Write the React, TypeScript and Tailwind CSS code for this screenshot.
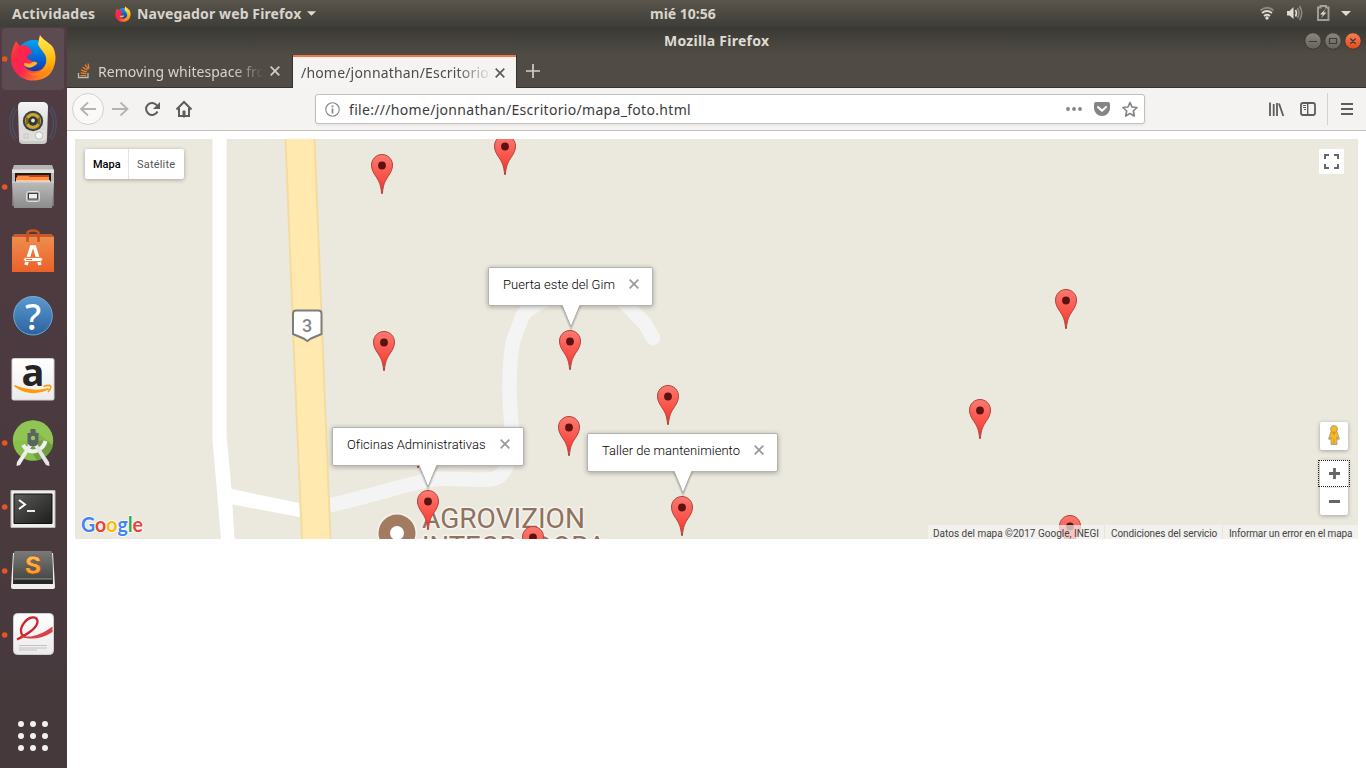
import React from "react";

const MARKERS: [number, number][] = [
  [505, 135],
  [382, 154],
  [1066, 289],
  [570, 330],
  [384, 331],
  [668, 385],
  [980, 399],
  [569, 416],
  [418, 428],
  [428, 490],
  [682, 496],
  [1070, 515],
  [533, 526],
];

function Marker({ x, y }: { x: number; y: number }) {
  return (
    <g transform={`translate(${x - 11} ${y})`}>
      <path
        d="M11 .5C5.2.5.5 5.2.5 11c0 4.300 1.700 7.500 4.300 11.300C7.900 26.800 10 31 10.600 39.500h.8C12 31 14.100 26.800 17.200 22.300 19.800 18.500 21.500 15.300 21.500 11 21.500 5.200 16.800.5 11 .5z"
        fill="url(#pin)"
        stroke="#b3443c"
        strokeWidth="1"
      />
      <circle cx="11" cy="11.500" r="3.900" fill="#5b1210" />
    </g>
  );
}

function Cross({ className }: { className: string }) {
  return (
    <svg className={className} viewBox="0 0 10 10" stroke="currentColor" strokeWidth="1.700" fill="none">
      <path d="M.7.700 9.300 9.300M9.300.700.7 9.300" />
    </svg>
  );
}

function InfoWindow({ text, className }: { text: string; className: string }) {
  return (
    <div className={"absolute flex h-[39px] rounded-[2px] border border-[#b4b3ae] bg-white pl-[14px] pr-[13px] shadow-[0_1px_5px_rgba(0,0,0,0.3)] " + className}>
      <span className="mt-[8px] grow whitespace-nowrap font-[Roboto] text-[13px] font-light leading-[18px] tracking-[0.02px] text-black">{text}</span>
      <Cross className="mt-[11px] size-[10px] text-[#989898]" />
    </div>
  );
}

function Tail({ x, y }: { x: number; y: number }) {
  return (
    <g transform={`translate(${x} ${y})`}>
      <path d="M-9 .5 0 22 9 .5" fill="none" stroke="#000" strokeOpacity=".12" strokeWidth="3.500" />
      <path d="M-9 0 0 22 9 0" fill="#fff" stroke="#a9a8a3" strokeWidth="1" />
      <path d="M-8.500-2h17V0l-.5 1h-16z" fill="#fff" />
    </g>
  );
}

function MapCanvas() {
  return (
    <svg className="absolute inset-0 h-[400px] w-[1283px]" viewBox="75 139 1283 400">
      <defs>
        <linearGradient id="pin" x1="0" y1="0" x2="0" y2="1">
          <stop offset="0" stopColor="#fc7a70" />
          <stop offset=".65" stopColor="#f94c43" />
          <stop offset="1" stopColor="#e0352d" />
        </linearGradient>
      </defs>
      <path d="M75 139H1358V539H75z" fill="#ebe8de" />
      <path d="M212.500 139H226.700V437L231.500 489 302 503.500V517.500L232.500 504.500 234.500 539H221L212.500 440z" fill="#fff" />
      <path
        d="M322 507C360 499 390 489 420 482 445 475 470 482 493 479 506 477 513 455 512 428 509 405 508 370 513 341L523 315Q527 309 545 300C570 287 604 284 625 303L645 324 653 338"
        fill="none"
        stroke="#f4f4f4"
        strokeWidth="14.500"
        strokeLinecap="round"
        strokeLinejoin="round"
      />
      <path d="M284.500 139H315.500L325 390 331 539H301L295 390z" fill="#ffe9ae" />
      <path d="M285.500 139 295.500 390 302 539M314.500 139 324.500 390 330.500 539" fill="none" stroke="#f3dca2" strokeWidth="2" />
      <path d="M293 313.500q0-3 3-3H318.500q3 0 3 3V334L311 338.500 307.300 341 303.500 338.500 293 334z" fill="#fff" stroke="#7d7d7d" strokeWidth="2" />
      <text x="307.200" y="332" textAnchor="middle" fontFamily="Roboto" fontSize="18" fontWeight="500" fill="#858585">3</text>
      <g stroke="#f5f3ee" strokeWidth="3" paintOrder="stroke" strokeLinejoin="round">
        <circle cx="397" cy="533" r="18.500" fill="#a27b60" />
        <g fontFamily="Roboto" fontSize="27" fill="#8f725f">
          <text x="422" y="527.500" textLength="163" lengthAdjust="spacingAndGlyphs">AGROVIZION</text>
          <text x="422" y="555.500" textLength="184" lengthAdjust="spacingAndGlyphs">INTEGRADORA</text>
        </g>
      </g>
      <circle cx="397" cy="533" r="7" fill="#fff" />
      {MARKERS.map(([x, y]) => (
        <Marker key={x} x={x} y={y} />
      ))}
      <text x="81" y="532" fontFamily="Lato" fontSize="21" fontWeight="700" textLength="62" lengthAdjust="spacingAndGlyphs" stroke="#fff" strokeWidth="2" strokeOpacity=".75" paintOrder="stroke">
        <tspan fill="#4285f4">G</tspan>
        <tspan fill="#ea4335">o</tspan>
        <tspan fill="#fbbc05">o</tspan>
        <tspan fill="#4285f4">g</tspan>
        <tspan fill="#34a853">l</tspan>
        <tspan fill="#ea4335">e</tspan>
      </text>
    </svg>
  );
}

function MapView() {
  return (
    <div className="relative h-[400px] w-[1283px] overflow-hidden font-[Roboto]">
      <MapCanvas />
      <InfoWindow text="Puerta este del Gim" className="left-[413px] top-[128px] w-[165px]" />
      <InfoWindow text="Oficinas Administrativas" className="left-[257px] top-[288px] w-[192px]" />
      <InfoWindow text="Taller de mantenimiento" className="left-[512px] top-[294px] w-[191px]" />
      <svg className="absolute inset-0 h-[400px] w-[1283px]" viewBox="75 139 1283 400">
        <Tail x={571} y={305} />
        <Tail x={428} y={465} />
        <Tail x={683} y={471} />
      </svg>
      <div className="absolute left-[10px] top-[10px] flex h-[30px] rounded-[2px] bg-white text-[11px] leading-[31px] shadow-[0_1px_4px_rgba(0,0,0,0.3)]">
        <span className="w-[43px] pl-[8px] font-medium text-black">Mapa</span>
        <span className="w-[56px] border-l border-[#e3e3e3] pl-[8px] tracking-[0.2px] text-[#565656]">Satélite</span>
      </div>
      <div className="absolute left-[1244px] top-[10px] flex size-[25px] items-center justify-center rounded-[1px] bg-white">
        <svg className="size-[15px]" viewBox="0 0 15 15" fill="none" stroke="#666" strokeWidth="2">
          <path d="M1 5V1h4M10 1h4v4M14 10v4h-4M5 14H1v-4" />
        </svg>
      </div>
      <div className="absolute left-[1245px] top-[283px] flex size-[28px] items-start justify-center rounded-[2px] bg-white pt-[3px] shadow-[0_1px_4px_rgba(0,0,0,0.3)]">
        <svg className="h-[20px] w-[12px]" viewBox="0 0 12 20" stroke="#8c8f96" strokeWidth=".7" fill="#fbb917">
          <path d="M3 6.500h6L11.500 14l-1.700.6L9 12v7.500H3V12l-.8 2.600L.5 14z" />
          <circle cx="6" cy="4" r="3.500" />
          <path d="M4 7.500h4L6 10z" fill="#e58b16" stroke="none" />
          <path d="M6 14v5.500" />
        </svg>
      </div>
      <div className="absolute left-[1245px] top-[321px] flex h-[55px] w-[28px] flex-col items-center rounded-[2px] bg-white shadow-[0_1px_4px_rgba(0,0,0,0.3)]">
        <svg className="h-[55px] w-[28px]" viewBox="0 0 28 55" stroke="#666" strokeWidth="2.800">
          <path d="M5 27.500h18" stroke="#e6e6e6" strokeWidth="1" />
          <path d="M9 13.500h11M14.500 8v11M9 41.500h11" />
        </svg>
      </div>
      <div className="absolute left-[1243px] top-[321px] h-[27px] w-[32px] border border-dotted border-[#222]" />
      <div className="absolute bottom-0 right-0 flex h-[14px] bg-[rgba(245,245,245,0.7)] text-[10px] leading-[17px] text-[#444]">
        <span className="w-[177px] whitespace-nowrap border-r border-[#e6e4dd] pl-[5px]">Datos del mapa ©2017 Google, INEGI</span>
        <span className="w-[118px] whitespace-nowrap border-r border-[#e6e4dd] pl-[6px] tracking-[-0.08px]">Condiciones del servicio</span>
        <span className="w-[135px] whitespace-nowrap pl-[6px] tracking-[-0.12px]">Informar un error en el mapa</span>
      </div>
    </div>
  );
}

function FirefoxLogo() {
  return (
    <g>
      <circle cx="34" cy="59" r="19" fill="url(#ffBlue)" />
      <path d="M16 41 20 46 26 45 31 50 32 53 27 56 28 59 36 63C34 68 25 67 24 65 26 71 37 74 43 68 51 60 45 51 40 48L38 42 40 35C42 39 48 42 52 46 58 54 56 68 49 75 38 84 21 82 14 70 9 61 11 50 16 41z" fill="url(#ffFire)" />
      <path d="M40 35C42 39 48 42 52 46 57 53 56 65 51 71 44 78 34 78 28 72 37 77 44 70 46 63 48 54 40 50 38 44z" fill="url(#ffYellow)" />
      <path d="M24 63C28 63 29 65 33 62 36 61 38 63 37 64 33 67 29 70 24 65z" fill="#ffb22b" />
    </g>
  );
}

function IconDefs() {
  return (
    <svg className="absolute size-0">
      <defs>
        <linearGradient id="ffBlue" x1="0" y1="0" x2="0" y2="1"><stop stopColor="#00a5f4" /><stop offset=".6" stopColor="#0758c9" /><stop offset="1" stopColor="#34127d" /></linearGradient>
        <linearGradient id="ffFire" x1="0" y1="0" x2="1" y2=".7"><stop stopColor="#ff6b22" /><stop offset=".25" stopColor="#ff2b45" /><stop offset=".5" stopColor="#fb2154" /><stop offset="1" stopColor="#ff9a12" /></linearGradient>
        <linearGradient id="ffYellow" x1="0" y1="0" x2="0" y2="1"><stop stopColor="#fff158" /><stop offset=".6" stopColor="#ffb90b" /><stop offset="1" stopColor="#ff7f18" /></linearGradient>
        <linearGradient id="silver" x1="0" y1="0" x2="0" y2="1"><stop stopColor="#f5f5f5" /><stop offset="1" stopColor="#c9c9c7" /></linearGradient>
        <linearGradient id="gray" x1="0" y1="0" x2="0" y2="1"><stop stopColor="#bababa" /><stop offset="1" stopColor="#8c8c8c" /></linearGradient>
        <linearGradient id="orange" x1="0" y1="0" x2="0" y2="1"><stop stopColor="#ed9151" /><stop offset="1" stopColor="#ec6128" /></linearGradient>
        <linearGradient id="blue" x1="0" y1="0" x2="0" y2="1"><stop stopColor="#5a9ad0" /><stop offset="1" stopColor="#2c629e" /></linearGradient>
        <linearGradient id="dark" x1="0" y1="0" x2="1" y2="1"><stop stopColor="#5b5b59" /><stop offset="1" stopColor="#1d1d1c" /></linearGradient>
        <linearGradient id="sub" x1="0" y1="0" x2="0" y2="1"><stop stopColor="#7a7a78" /><stop offset="1" stopColor="#484846" /></linearGradient>
        <linearGradient id="paper" x1="0" y1="0" x2="0" y2="1"><stop stopColor="#fff" /><stop offset="1" stopColor="#ebebeb" /></linearGradient>
        <linearGradient id="sOrange" x1="0" y1="0" x2="0" y2="1"><stop stopColor="#ffc86d" /><stop offset="1" stopColor="#ff8a0e" /></linearGradient>
      </defs>
    </svg>
  );
}

const DOCK: { name: string; running: boolean; art: React.ReactNode }[] = [
  { name: "Firefox", running: true, art: <FirefoxLogo /> },
  {
    name: "Rhythmbox",
    running: false,
    art: (
      <g>
        <g fill="none" stroke="#4a6489" strokeWidth="1.300" opacity=".5">
          <path d="M15 107C8 115 8 132 15 140M17 109C11 117 11 130 17 138M51 107C58 115 58 132 51 140M49 109C55 117 55 130 49 138" />
        </g>
        <path d="M22 102H44Q48 103 48 107L47 140Q47 144 43 144H23Q19 144 19 140L18 107Q18 102 22 102z" fill="url(#silver)" />
        <path d="M20 130H46V138Q45 141 42 141H24Q20 141 20 138z" fill="#dededb" />
        <circle cx="33" cy="121" r="10.200" fill="#3c4147" />
        <circle cx="33" cy="121" r="8" fill="#c8a928" />
        <path d="M33 121 26 117V125zM33 121 40 117V125z" fill="#7e6714" />
        <circle cx="33" cy="121" r="4.700" fill="#2e3645" />
        <circle cx="33" cy="120.500" r="1.900" fill="#eee9cb" />
        <circle cx="39" cy="135.500" r="3.700" fill="#f6f6f5" stroke="#bcbcba" />
        <rect x="24" y="134" width="4" height="4" fill="none" stroke="#c6c6c3" />
      </g>
    ),
  },
  {
    name: "Archivos",
    running: true,
    art: (
      <g>
        <path d="M14 165H52L54 171V206H12V171z" fill="#787876" />
        <path d="M14 165H52L54 171H12z" fill="#b5b5b3" />
        <path d="M12 169.500H54V173H12z" fill="#e3e3e1" />
        <path d="M12 173H54V183H12z" fill="#bcbcba" />
        <path d="M15 173H51V182H15z" fill="#1b1b1b" />
        <path d="M17 175H49V182H17z" fill="#bd4712" />
        <path d="M16 178 18 176H28L30 177H49V182H16z" fill="#ff8d42" />
        <path d="M16 180H50V183H16z" fill="#ffc59c" />
        <path d="M12 182H54L52 208H14z" fill="url(#gray)" />
        <path d="M12 182H54" stroke="#d7d7d5" />
        <rect x="26.500" y="191.500" width="13" height="10" rx="2" fill="#a6a6a4" stroke="#dddddb" />
        <rect x="28.500" y="193.500" width="9" height="5.500" fill="#eee" stroke="#3d3d3d" />
      </g>
    ),
  },
  {
    name: "Software",
    running: false,
    art: (
      <g>
        <path d="M12 237 15 234H51L54 237V272H12z" fill="url(#orange)" />
        <path d="M12 237 15 234H51L54 237z" fill="#c8592a" />
        <path d="M27.500 242V233Q28 230.500 33 230.500T38.500 233V242" fill="none" stroke="#cf5120" strokeWidth="2.600" />
        <path d="M26 265 31.500 247H34.500L40 265" fill="none" stroke="#fff" strokeWidth="3.500" />
        <rect x="23.500" y="257.500" width="19" height="4" rx="2" fill="#fff" stroke="#ee7c44" />
        <path d="M26 259.500H32" stroke="#ed7038" />
      </g>
    ),
  },
  {
    name: "Ayuda",
    running: false,
    art: (
      <g>
        <circle cx="33" cy="316.500" r="20" fill="#213b59" opacity=".5" />
        <circle cx="33" cy="315.700" r="19.300" fill="url(#blue)" stroke="#79a7d0" />
        <text x="33" y="329.500" textAnchor="middle" fontFamily="Noto Sans" fontSize="36" fontWeight="500" fill="#fff">?</text>
      </g>
    ),
  },
  {
    name: "Amazon",
    running: false,
    art: (
      <g>
        <rect x="12" y="358.500" width="42" height="41.500" rx="1.500" fill="url(#paper)" stroke="#d2d1d1" />
        <text x="33" y="386" textAnchor="middle" fontFamily="Open Sans" fontSize="38" fontWeight="700" fill="#242424">a</text>
        <path d="M15 386Q31 397 48 389 32 393 15 386z" fill="#ff9905" stroke="#ff9905" strokeWidth="1.600" strokeLinejoin="round" />
        <path d="M43.500 386.500Q49 384.500 50.500 386T48 392" fill="none" stroke="#ff9905" strokeWidth="1.600" />
      </g>
    ),
  },
  {
    name: "Android Studio",
    running: true,
    art: (
      <g>
        <circle cx="33" cy="440.500" r="20.200" fill="#89bf4c" />
        <path d="M33 428 53 446A20 20 0 0 1 37 460L30 450z" fill="#6f9f3f" />
        <path d="M13 440.500A20 20 0 0 1 53 440.500z" fill="#98cb59" opacity=".5" />
        <path d="M23 445Q28 453 36 451 44 448 45.500 441" fill="none" stroke="#f1f1f1" strokeWidth="4" />
        <path d="M29.500 443 32.500 445 20 465 16.500 466 17 462z" fill="#eee" />
        <path d="M36.500 443 33.500 445 46 465 49.500 466 49 462z" fill="#e5e5e5" />
        <path d="M30.500 429H35.500V433H38.500V443L36 446H30L27.500 443V433H30.500z" fill="#5b6264" />
        <circle cx="33" cy="438" r="2.200" fill="#97c75a" />
      </g>
    ),
  },
  {
    name: "Terminal",
    running: true,
    art: (
      <g>
        <path d="M11 490.500H55V527.500H11z" fill="#eeeeec" stroke="#bcbcba" />
        <path d="M14 494H52V523.500H14z" fill="url(#dark)" stroke="#111" />
        <path d="M19 500 25 504.500 19 509" fill="none" stroke="#fff" strokeWidth="2" />
        <path d="M27 511H35" stroke="#fff" strokeWidth="1.800" />
      </g>
    ),
  },
  {
    name: "Sublime Text",
    running: true,
    art: (
      <g>
        <path d="M13 553H53L55 587Q55 589 53 589H13Q11 589 11 587z" fill="#efefed" />
        <path d="M15 551H51Q52 551 52 553L53 584H13L14 553Q14 551 15 551z" fill="#272727" />
        <path d="M15 551H51Q52 551 52 553L53 579H13L14 553Q14 551 15 551z" fill="url(#sub)" />
        <path d="M14 579H52" stroke="#989896" />
        <text x="33" y="574" textAnchor="middle" fontFamily="Inter" fontSize="25" fontWeight="800" fill="url(#sOrange)" stroke="#744018" strokeWidth=".4">S</text>
      </g>
    ),
  },
  {
    name: "Evince",
    running: true,
    art: (
      <g>
        <rect x="13.500" y="613.500" width="40" height="41" rx="4" fill="url(#paper)" stroke="#cfcfcf" />
        <path d="M17 639.500C30 633 38 626 37.500 621 36.500 616 29 616 24 623 19.500 629 20 635 25.500 637" fill="none" stroke="#d0252f" strokeWidth="2.300" />
        <path d="M20 635C30 639 41 635 52.500 626.500V632C42 639 31 640 22 637z" fill="#dc3f46" />
        <path d="M19 645.500H47M19 648H47M19 650H37" stroke="#c2c2c2" />
      </g>
    ),
  },
];

function Dock() {
  return (
    <nav className="flex w-[67px] shrink-0 flex-col bg-linear-to-b from-[#503c42] via-[#4b3a3f] to-[#45393c]">
      {DOCK.map((item, i) => (
        <button key={item.name} aria-label={item.name} className="h-[64px] w-[67px] shrink-0">
          <svg className="h-[64px] w-[67px]" viewBox={`0 ${27 + i * 64} 67 64`}>
            {i === 0 && <rect x="2" y="28" width="62" height="62" rx="4" fill="#5d4b52" />}
            {item.running && <circle cx="4.700" cy={59 + i * 64} r="2.800" fill="#e95420" />}
            {item.art}
          </svg>
        </button>
      ))}
      <div className="mt-auto grid w-[67px] grid-cols-3 gap-[6px] pb-[17px] pl-[18px] pr-[19px]">
        {[0, 1, 2, 3, 4, 5, 6, 7, 8].map((n) => (
          <span key={n} className="size-[6px] rounded-full bg-[#f2f1f0]" />
        ))}
      </div>
    </nav>
  );
}

function TopBar() {
  return (
    <header className="flex h-[27px] shrink-0 items-center bg-linear-to-b from-[#5a554c] to-[#3e3d38] text-[14px] font-bold leading-[27px] text-[#d8d4cb]">
      <span className="w-[115px] pl-[12px] tracking-[0.22px]">Actividades</span>
      <svg className="size-[16px]" viewBox="10 34 47 47"><FirefoxLogo /></svg>
      <span className="w-[176px] whitespace-nowrap pl-[6px] tracking-[0.12px]">Navegador web Firefox</span>
      <svg className="mr-auto h-[5px] w-[9px] fill-[#dfdbd2]" viewBox="0 0 10 5"><path d="M0 0h10L5 5z" /></svg>
      <span className="w-[608px] whitespace-nowrap leading-[25px]">mié 10:56</span>
      <svg className="h-[27px] w-[108px]" viewBox="1258 0 108 27" fill="none" stroke="#dfdbd2">
        <path d="M1260.500 10.500Q1267 5 1273.500 10.500" strokeWidth="2" opacity=".4" />
        <path d="M1262 13Q1267 9 1272 13M1264 16Q1267 13.500 1270 16" strokeWidth="1.800" />
        <circle cx="1267" cy="18" r="1.700" fill="#dfdbd2" stroke="none" />
        <path d="M1287 11H1289.500L1293.500 7V19L1289.500 15.500H1287z" fill="#dfdbd2" stroke="none" />
        <path d="M1295.500 10Q1297.500 13 1295.500 16.500" strokeWidth="1.600" />
        <path d="M1297.500 8Q1300.500 13 1297.500 18M1299.500 6Q1304 13 1299.500 20" strokeWidth="1.500" opacity=".45" />
        <path d="M1318 7.500H1320.500V6H1326V7.500H1328.500V20H1318z" strokeWidth="1.900" opacity=".6" />
        <path d="M1325.500 9 1320 14.500H1323L1321 18 1326.500 12.500H1323.500z" fill="#dfdbd2" stroke="none" />
        <path d="M1341 11h10l-5 5z" fill="#dfdbd2" stroke="none" />
      </svg>
    </header>
  );
}

function TitleBar() {
  return (
    <div className="flex h-[28px] shrink-0 items-center bg-linear-to-b from-[#3a3934] to-[#504c45]">
      <span className="ml-[597px] w-[640px] text-[14px] font-bold leading-[28px] tracking-[0.26px] text-[#dfdbd2]">Mozilla Firefox</span>
      <svg className="h-[28px] w-[62px]" viewBox="1304 27 62 28">
        <defs>
          <linearGradient id="btn" x1="0" y1="0" x2="0" y2="1"><stop stopColor="#8a877f" /><stop offset="1" stopColor="#66635c" /></linearGradient>
          <linearGradient id="btnClose" x1="0" y1="0" x2="0" y2="1"><stop stopColor="#f38059" /><stop offset="1" stopColor="#e14a15" /></linearGradient>
        </defs>
        <g stroke="#34332f" strokeWidth=".8">
          <circle cx="1313" cy="41" r="8.200" fill="url(#btn)" />
          <circle cx="1333" cy="41" r="8.200" fill="url(#btn)" />
          <circle cx="1353" cy="41" r="8.200" fill="url(#btnClose)" />
        </g>
        <path d="M1309 41.500h8M1329.500 38.500h7v5h-7zM1350.300 38.500l5.400 5.200M1355.700 38.500l-5.400 5.200" fill="none" stroke="#3c3b37" strokeWidth="1.200" />
      </svg>
    </div>
  );
}

function TabStrip() {
  return (
    <div className="flex h-[33px] shrink-0 bg-[#504c45] text-[14px] leading-[33px]">
      <div className="flex w-[226px] items-center border-b border-r border-[#33322e] pl-[10px]">
        <svg className="h-[16px] w-[14px]" viewBox="0 0 14 16" fill="none">
          <path d="M1.500 10v4.500h9.500V10" stroke="#bcbbb8" strokeWidth="1.300" />
          <path d="M3.500 12.500h5.700M3.700 9.900l5.600.7M4.300 7.200l5.400 1.600M5.700 4.200l4.800 2.900M8 1.700l3.500 4.500M11 .5l1 5.200" stroke="#f48024" strokeWidth="1.200" />
        </svg>
        <span className="ml-[7px] w-[166px] overflow-hidden whitespace-nowrap tracking-[0.05px] text-[#d8d4cb] [mask-image:linear-gradient(to_right,#000_135px,transparent_166px)]">Removing whitespace from</span>
        <Cross className="ml-[6px] size-[10px] text-[#d2cfc7]" />
      </div>
      <div className="flex w-[223px] items-center border-t-2 border-[#f07746] bg-[#f5f4f2] pl-[8px] leading-[29px] text-[#4c4c4c]">
        <span className="w-[188px] overflow-hidden whitespace-nowrap tracking-[0.18px] [mask-image:linear-gradient(to_right,#000_155px,transparent_192px)]">/home/jonnathan/Escritorio/mapa_foto.html</span>
        <Cross className="ml-[6px] size-[10px] text-[#5c5c5c]" />
      </div>
      <div className="flex grow items-center border-b border-l border-[#33322e] pl-[9px]">
        <svg className="size-[14px]" viewBox="0 0 14 14" stroke="#d2cfc7" strokeWidth="1.700"><path d="M0 7h14M7 0v14" /></svg>
      </div>
    </div>
  );
}

function NavBar() {
  return (
    <div className="flex h-[43px] shrink-0 items-center border-b border-[#c5c2be] bg-[#f4f3f1]">
      <svg className="h-[42px] w-[248px] shrink-0" viewBox="67 88 248 42" fill="none" stroke="#5d5d5b" strokeWidth="2">
        <circle cx="88" cy="109" r="15.500" fill="#faf9f8" stroke="#d4d2cf" strokeWidth="1" />
        <path d="M96 109H81M88 102.500 81 109 88 115.500" stroke="#b4b3b1" strokeWidth="1.800" />
        <path d="M112 109H127M120.500 102.500 127.500 109 120.500 115.500" stroke="#b4b3b1" strokeWidth="1.800" />
        <path d="M157.500 111.500A6 6 0 1 1 157 105.500" />
        <path d="M160 102V109H153z" fill="#5d5d5b" stroke="none" />
        <path d="M176.500 109.500 184 102 191.500 109.500M179 108V116H189V108" />
        <path d="M183 111H185V117H183z" fill="#5d5d5b" strokeWidth="1" />
      </svg>
      <div className="flex h-[30px] w-[830px] shrink-0 items-center rounded-[3px] border border-[#c3c0bc] bg-white pl-[9px] shadow-[0_1px_3px_rgba(0,0,0,0.08)]">
        <svg className="size-[15px]" viewBox="0 0 15 15" fill="none" stroke="#858585">
          <circle cx="7.500" cy="7.500" r="6.700" strokeWidth="1.100" />
          <path d="M7.500 6.500v5M7.500 3.500v1.700" strokeWidth="1.700" />
        </svg>
        <span className="ml-[9px] mt-px grow whitespace-nowrap text-[14px] leading-[28px] tracking-[0.31px] text-[#3b3b3b]">file:///home/jonnathan/Escritorio/mapa_foto.html</span>
        <svg className="h-[28px] w-[82px]" viewBox="1062 95 82 28" fill="#858585">
          <circle cx="1068" cy="109" r="1.900" /><circle cx="1074" cy="109" r="1.900" /><circle cx="1080" cy="109" r="1.900" />
          <path d="M1096 102H1108Q1110 102 1110 104V108Q1110 112 1106 115 1102 117 1098 115 1094 112 1094 108V104Q1094 102 1096 102z" />
          <path d="M1098 107 1102 110.700 1106 107" fill="none" stroke="#fff" strokeWidth="2" strokeLinecap="round" strokeLinejoin="round" />
          <path d="M1130 102.500 1132 107 1137 107.500 1133.300 111 1134.300 116 1130 113.500 1125.700 116 1126.700 111 1123 107.500 1128 107z" fill="none" stroke="#858585" strokeWidth="1.700" strokeLinejoin="round" />
        </svg>
      </div>
      <svg className="h-[42px] w-[221px] shrink-0" viewBox="1145 88 221 42" fill="none" stroke="#5d5d5b" strokeWidth="1.800">
        <path d="M1270 102.500V116M1273.700 104V116M1277 103V116M1279 103.500 1283.300 116" />
        <rect x="1301" y="103" width="14" height="12" rx="2" />
        <path d="M1307.700 103V115" strokeWidth="1.400" />
        <path d="M1303 105.500h3M1303 107.500h3M1304 109.500h2" strokeWidth="1" />
        <path d="M1327.500 93V125" stroke="#d4d2cf" strokeWidth="1" />
        <path d="M1341 104H1353M1341 109H1353M1341 114H1353" />
      </svg>
    </div>
  );
}

export default function App() {
  return (
    <div className="flex h-[768px] w-[1366px] flex-col overflow-hidden bg-white font-['Noto_Sans',sans-serif]">
      <IconDefs />
      <TopBar />
      <div className="flex h-[741px]">
        <Dock />
        <section className="flex w-[1299px] flex-col">
          <TitleBar />
          <TabStrip />
          <NavBar />
          <main className="grow bg-white p-[8px]">
            <MapView />
          </main>
        </section>
      </div>
    </div>
  );
}
